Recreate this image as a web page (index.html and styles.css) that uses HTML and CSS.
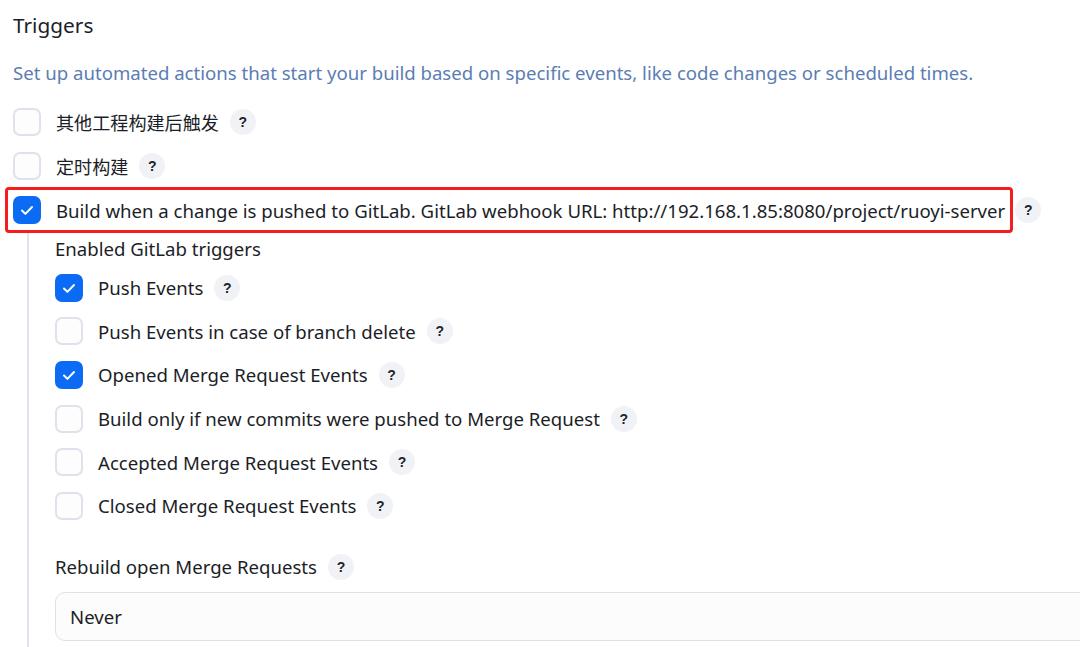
FILE: index.html
```html
<!DOCTYPE html>
<html lang="zh">
<head>
<meta charset="utf-8">
<link rel="stylesheet" href="styles.css">
</head>
<body>
<div class="page">
  <h2 class="title">Triggers</h2>
  <p class="desc">Set up automated actions that start your build based on specific events, like code changes or scheduled times.</p>

  <div class="row">
    <span class="cb"></span>
    <span class="label zh">其他工程构建后触发</span>
    <span class="help">?</span>
  </div>
  <div class="row">
    <span class="cb"></span>
    <span class="label zh">定时构建</span>
    <span class="help">?</span>
  </div>
  <div class="row">
    <span class="mark">
      <span class="cb on"><svg viewBox="0 0 28 28"><path d="M9 14.5l3.4 3.4L19 11" /></svg></span>
      <span class="label">Build when a change is pushed to GitLab. GitLab webhook URL: http://192.168.1.85:8080/project/ruoyi-server</span>
    </span>
    <span class="help">?</span>
  </div>

  <div class="nested">
    <div class="sublabel">Enabled GitLab triggers</div>
    <div class="row">
      <span class="cb on"><svg viewBox="0 0 28 28"><path d="M9 14.5l3.4 3.4L19 11" /></svg></span>
      <span class="label">Push Events</span>
      <span class="help">?</span>
    </div>
    <div class="row">
      <span class="cb"></span>
      <span class="label">Push Events in case of branch delete</span>
      <span class="help">?</span>
    </div>
    <div class="row">
      <span class="cb on"><svg viewBox="0 0 28 28"><path d="M9 14.5l3.4 3.4L19 11" /></svg></span>
      <span class="label">Opened Merge Request Events</span>
      <span class="help">?</span>
    </div>
    <div class="row">
      <span class="cb"></span>
      <span class="label">Build only if new commits were pushed to Merge Request</span>
      <span class="help">?</span>
    </div>
    <div class="row">
      <span class="cb"></span>
      <span class="label">Accepted Merge Request Events</span>
      <span class="help">?</span>
    </div>
    <div class="row">
      <span class="cb"></span>
      <span class="label">Closed Merge Request Events</span>
      <span class="help">?</span>
    </div>

    <div class="field-title">
      <span class="label">Rebuild open Merge Requests</span>
      <span class="help">?</span>
    </div>
    <div class="select">Never</div>
  </div>
</div>
</body>
</html>
```

FILE: styles.css
```css
html, body {
  margin: 0;
  padding: 0;
  background: #ffffff;
  overflow: hidden;
}
body {
  font-family: "Noto Sans", "Noto Sans CJK SC", sans-serif;
  color: #1b1e27;
  font-size: 18.6px;
}
.page {
  padding: 7px 0 0 13px;
  width: 1200px;
}
.title {
  margin: 0;
  font-size: 20.8px;
  font-weight: 400;
  line-height: 36px;
}
.desc {
  margin: 17px 0 14px;
  color: #5b7db3;
  font-size: 18.6px;
  line-height: 26px;
}
.row {
  display: flex;
  align-items: center;
  height: 44px;
}
.nested .row {
  height: 43.6px;
}
.cb {
  box-sizing: border-box;
  width: 28px;
  height: 28px;
  border: 2px solid #dfe2ea;
  border-radius: 7px;
  background: #fdfdfe;
  flex: none;
  display: flex;
  align-items: center;
  justify-content: center;
}
.cb.on {
  background: #0b6bf4;
  border-color: #0b6bf4;
}
.cb svg {
  width: 28px;
  height: 28px;
  flex: none;
}
.cb svg path {
  fill: none;
  stroke: #ffffff;
  stroke-width: 2;
  stroke-linecap: round;
  stroke-linejoin: round;
}
.label {
  margin-left: 15px;
  white-space: nowrap;
}
.label.zh {
  font-size: 18.1px;
}
.help {
  box-sizing: border-box;
  width: 26px;
  height: 26px;
  border-radius: 50%;
  background: #f1f2f6;
  margin-left: 11px;
  flex: none;
  display: flex;
  align-items: center;
  justify-content: center;
  font-family: "Liberation Sans", sans-serif;
  font-weight: 700;
  font-size: 14px;
  color: #20232c;
}
.mark {
  display: flex;
  align-items: center;
  border: 3px solid #f41c1c;
  border-radius: 4px;
  margin: -9px 0 -9px -8px;
  padding: 6px 5px;
}
.mark + .help {
  margin-left: 2px;
}
.nested {
  margin-left: 14px;
  border-left: 2px solid #e1e4ec;
  padding-left: 26px;
  padding-top: 2px;
  padding-bottom: 20px;
}
.sublabel {
  line-height: 26px;
  margin-top: 2px;
  margin-bottom: 4px;
}
.field-title {
  display: flex;
  align-items: center;
  margin-top: 22px;
  height: 34px;
}
.field-title .label {
  margin-left: 0;
}
.select {
  margin-top: 8px;
  box-sizing: border-box;
  height: 49px;
  border: 1.5px solid #dde1ea;
  border-radius: 10px;
  background: #fcfcfc;
  padding: 0 14px;
  display: flex;
  align-items: center;
  width: 1100px;
}
```
